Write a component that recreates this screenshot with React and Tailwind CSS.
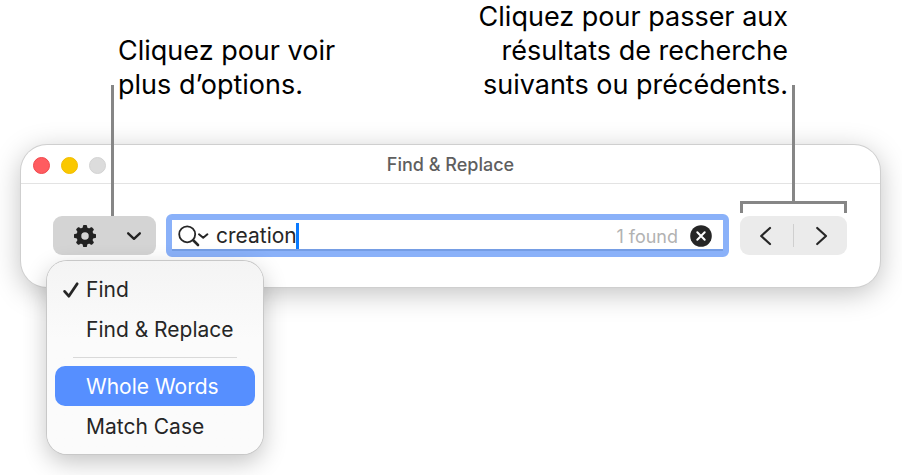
import { useState } from 'react';

const TEETH = [0, 45, 90, 135, 180, 225, 270, 315];

function GearIcon() {
  return (
    <svg viewBox="0 0 24 24" className="h-6 w-6" aria-hidden="true">
      <circle cx="12" cy="12" r="6.2" fill="none" stroke="currentColor" strokeWidth="4.9" />
      {TEETH.map((deg) => (
        <path
          key={deg}
          d="M9.4 4.8 10.1 1.6Q10.2 1 10.8 1H13.2Q13.8 1 13.9 1.6L14.6 4.8Z"
          transform={`rotate(${deg} 12 12)`}
          fill="currentColor"
        />
      ))}
    </svg>
  );
}

function Chevron({ d, className, width = 2 }) {
  return (
    <svg
      viewBox="0 0 20 20"
      className={className}
      fill="none"
      stroke="currentColor"
      strokeWidth={width}
      strokeLinecap="round"
      strokeLinejoin="round"
      aria-hidden="true"
    >
      <path d={d} />
    </svg>
  );
}

function SearchIcon() {
  return (
    <svg
      viewBox="0 0 32 24"
      className="h-6 w-8 shrink-0"
      fill="none"
      stroke="currentColor"
      strokeLinecap="round"
      strokeLinejoin="round"
      aria-hidden="true"
    >
      <circle cx="9.2" cy="10.3" r="8" strokeWidth="1.8" />
      <path d="M15.2 16.3 20 21" strokeWidth="2.6" />
      <path d="M21 10.3 25.2 13.8 29.4 10.3" strokeWidth="2" />
    </svg>
  );
}

function MenuItem({ label, checked, active }) {
  return (
    <button
      type="button"
      role="menuitem"
      className={`flex h-10 w-full items-center rounded-[10px] pt-[2px] pl-[7px] text-left text-[21px] ${
        active ? 'bg-[#568fff] text-white' : 'text-[#262626]'
      }`}
    >
      <span className="w-6 shrink-0">
        {checked && (
          <svg viewBox="0 0 18 18" className="h-[18px] w-[18px]" fill="none" stroke="currentColor"
            strokeWidth="2.8" strokeLinecap="round" strokeLinejoin="round" aria-hidden="true">
            <path d="M2.6 10.4 6.8 15.2 15.2 2.8" />
          </svg>
        )}
      </span>
      {label}
    </button>
  );
}

function OptionsMenu() {
  return (
    <div
      role="menu"
      className="absolute top-full -left-[6px] z-10 mt-[6px] w-[216px] rounded-[20px] bg-linear-to-b
                 from-[#f4f4f4] to-[#fbfbfb] to-40% p-2 shadow-[0_0_0_1px_#c8c8c8,0_8px_24px_rgba(0,0,0,0.24)]"
    >
      <MenuItem label="Find" checked />
      <MenuItem label="Find &amp; Replace" />
      <div className="mx-[18px] my-2 h-px bg-[#d9d9d9]" />
      <MenuItem label="Whole Words" active />
      <MenuItem label="Match Case" />
    </div>
  );
}

function FindWindow() {
  const [query, setQuery] = useState('creation');

  return (
    <section className="rounded-[26px] bg-white shadow-[0_0_0_1px_#cfcfcf,0_6px_28px_rgba(0,0,0,0.25)]">
      {/* Title bar */}
      <header className="grid grid-cols-[1fr_auto_1fr] items-center border-b border-[#e3e3e3] px-3 pt-[2px]">
        <div className="flex gap-[11px]">
          <button type="button" aria-label="Close" className="h-[17px] w-[17px] rounded-full border border-[#f0474c] bg-[#ff5c60]" />
          <button type="button" aria-label="Minimize" className="h-[17px] w-[17px] rounded-full border border-[#f2bd00] bg-[#fac800]" />
          <button type="button" aria-label="Zoom" className="h-[17px] w-[17px] rounded-full border border-[#d3d3d3] bg-[#dcdcdc]" />
        </div>
        <h1 className="text-lg leading-9 font-medium text-[#5f5f5f]">Find &amp; Replace</h1>
      </header>

      {/* Search bar */}
      <div className="flex items-center pt-[30px] pr-[33px] pb-[30px] pl-8">
        <div className="relative shrink-0">
          <button
            type="button"
            aria-label="Search options"
            aria-haspopup="menu"
            aria-expanded="true"
            className="flex h-[39px] w-[103px] items-center justify-between rounded-[9px] bg-[#d4d4d4] pr-[13px] pl-5 text-[#222]"
          >
            <GearIcon />
            <Chevron d="M3.5 7 10 13.2 16.5 7" className="h-[18px] w-[18px]" width={2.6} />
          </button>
          <span className="absolute bottom-full left-[58px] h-[131px] w-[3px] bg-[#868686]" />
          <OptionsMenu />
        </div>

        <div className="ml-[10px] flex h-[43px] min-w-0 flex-1 items-center rounded-md border-[6px] border-[#8ab1f9] bg-white pr-[11px] pl-[6px] text-[#262626] shadow-[inset_0_-2px_0_#759de4]">
          <SearchIcon />
          <input
            type="text"
            aria-label="Find"
            value={query}
            onChange={(e) => setQuery(e.target.value)}
            className="ml-[6px] field-sizing-content min-w-0 text-[21px] leading-7 outline-none"
          />
          <span className="-ml-px h-[26px] w-[3px] shrink-0 bg-[#0a7aff]" />
          <span className="ml-auto shrink-0 pt-[3px] text-lg text-[#b2b2b2]">1 found</span>
          <button type="button" aria-label="Clear" className="ml-3 shrink-0">
            <svg viewBox="0 0 22 22" className="block h-[22px] w-[22px]" aria-hidden="true">
              <circle cx="11" cy="11" r="10.8" fill="#262626" />
              <path d="M7.3 7.3 14.7 14.7M14.7 7.3 7.3 14.7" stroke="#fff" strokeWidth="2" strokeLinecap="round" />
            </svg>
          </button>
        </div>

        <div className="relative ml-[11px] flex h-[39px] w-[107px] shrink-0 items-center rounded-[9px] bg-[#ebebeb] text-[#262626]">
          <button type="button" aria-label="Previous" className="flex h-full flex-1 items-center justify-center">
            <Chevron d="M13 2 4.2 10 13 18" className="h-5 w-5" width={2.2} />
          </button>
          <span className="h-[23px] w-px bg-[#cfcfcf]" />
          <button type="button" aria-label="Next" className="flex h-full flex-1 items-center justify-center">
            <Chevron d="M6.2 2 15 10 6.2 18" className="h-5 w-5" width={2.2} />
          </button>
          <span className="absolute inset-x-0 bottom-full mb-[3px] h-3 border-x-3 border-t-3 border-[#868686]" />
          <span className="absolute bottom-full left-[52px] mb-[15px] h-[116px] w-[3px] bg-[#868686]" />
        </div>
      </div>
    </section>
  );
}

export default function App() {
  return (
    <main className="min-h-screen bg-white pr-[22px] pl-[21px] font-['Inter',sans-serif]">
      <div className="flex items-end justify-between pr-[92px] pb-[43px] pl-[97px] text-[27px] leading-[34px] text-black">
        <p>
          Cliquez pour voir
          <br />
          plus d’options.
        </p>
        <p className="text-right">
          Cliquez pour passer aux
          <br />
          résultats de recherche
          <br />
          suivants ou précédents.
        </p>
      </div>
      <FindWindow />
    </main>
  );
}
